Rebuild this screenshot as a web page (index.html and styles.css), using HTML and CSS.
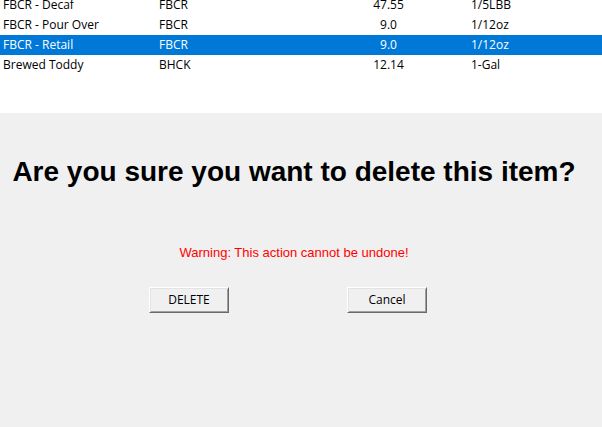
FILE: index.html
```html
<!DOCTYPE html>
<html lang="en">
<head>
<meta charset="utf-8">
<title>Delete item</title>
<link rel="stylesheet" href="styles.css">
</head>
<body>
<section class="list">
<table class="items">
<colgroup><col class="col-data"><col class="col-data"><col class="col-data"><col></colgroup>
<tbody>
<tr><td>FBCR - Decaf</td><td>FBCR</td><td class="price">47.55</td><td>1/5LBB</td></tr>
<tr><td>FBCR - Pour Over</td><td>FBCR</td><td class="price">9.0</td><td>1/12oz</td></tr>
<tr class="selected"><td>FBCR - Retail</td><td>FBCR</td><td class="price">9.0</td><td>1/12oz</td></tr>
<tr><td>Brewed Toddy</td><td>BHCK</td><td class="price">12.14</td><td>1-Gal</td></tr>
</tbody>
</table>
</section>
<main class="confirm">
<h1 class="question">Are you sure you want to delete this item?</h1>
<p class="warning">Warning: This action cannot be undone!</p>
<div class="actions">
<button type="button" class="button">DELETE</button>
<button type="button" class="button">Cancel</button>
</div>
</main>
</body>
</html>
```
FILE: styles.css
```css
* {
  box-sizing: border-box;
}

body {
  margin: 0;
  min-height: 100vh;
  background: #f0f0f0;
  color: #000;
  font: 12px/20px "Open Sans", "Noto Sans", sans-serif;
}

/* The list is scrolled a little past its first visible row. */
.list {
  background: #fff;
  padding-bottom: 38px;
  margin-top: -5px;
}

.items {
  width: 100%;
  table-layout: fixed;
  border-collapse: collapse;
}

.items td {
  height: 20px;
  padding: 0 3px;
  white-space: nowrap;
}

.col-data {
  width: 156px;
}

.items .price {
  padding-right: 6px;
  text-align: center;
}

.selected {
  background: #0078d7;
  color: #fff;
}

.confirm {
  display: flex;
  flex-direction: column;
  align-items: center;
  padding: 40px 14px 40px 0;
}

.question {
  margin: 0;
  font: bold 28px/38px "Liberation Sans", Arial, sans-serif;
  white-space: nowrap;
}

.warning {
  margin: 50px 0 22px;
  color: #f00;
  font: 13px/24px "Liberation Sans", Arial, sans-serif;
}

.actions {
  display: flex;
  gap: 118px;
  margin-right: 12px;
}

.button {
  width: 80px;
  height: 26px;
  padding: 0;
  border: 1px solid;
  border-color: #fff #696969 #696969 #fff;
  background: #f0f0f0;
  box-shadow: inset 1px 1px #e3e3e3, inset -1px -1px #a0a0a0;
  color: #000;
  font: inherit;
}
```
